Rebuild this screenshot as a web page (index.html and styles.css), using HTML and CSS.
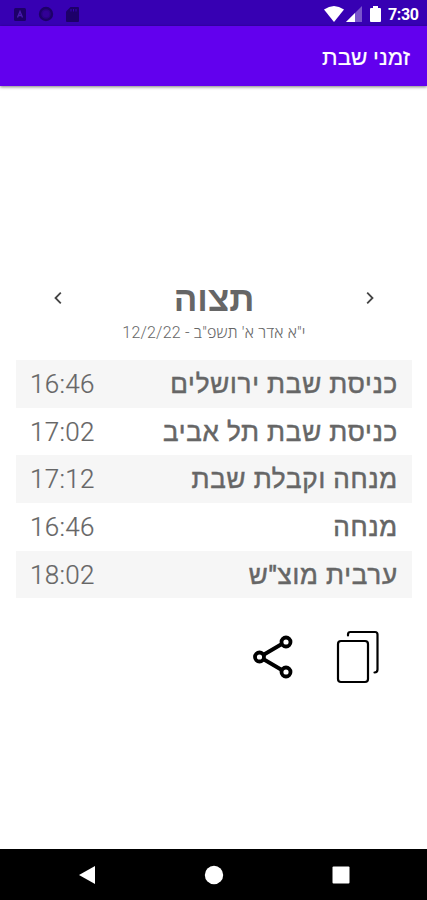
FILE: index.html
```
<!DOCTYPE html>
<html lang="he" dir="rtl">
<head>
<meta charset="UTF-8">
<meta name="viewport" content="width=device-width, initial-scale=1.0">
<title>זמני שבת</title>
<link rel="stylesheet" href="styles.css">
</head>
<body>

<div class="status-bar">
    <div class="notifications">
        <svg width="12" height="13" viewBox="0 0 12 13">
            <rect width="12" height="13" rx="1.5" fill="#1d0069"/>
            <path d="M3.5 9.5 6 3.5l2.5 6M4.5 7.5h3" fill="none" stroke="#4a1ab0" stroke-width="1.3"/>
        </svg>
        <svg width="16" height="16" viewBox="0 0 16 16">
            <circle cx="8" cy="8" r="6" fill="#2b0088" stroke="#1d0069" stroke-width="2.4"/>
            <circle cx="8" cy="8" r="3.2" fill="#320096"/>
        </svg>
        <svg width="13" height="15" viewBox="0 0 13 15">
            <path d="M4.5 0H12q1 0 1 1v13q0 1-1 1H1q-1 0-1-1V4.5z" fill="#1d0069"/>
            <path d="M5 2v2.5M7.5 2v2.5M10 2v2.5" stroke="#3700b3" stroke-width="1"/>
        </svg>
    </div>
    <div class="system">
        <svg width="20" height="16" viewBox="0 0 20 16">
            <path d="M0 3.5Q10-3.5 20 3.5L10 16z" fill="#fff"/>
        </svg>
        <svg class="signal" width="16" height="16" viewBox="0 0 16 16">
            <path d="M0 16 16 0v16z" fill="#7a54cc"/>
            <path d="M0 16 9 7v9z" fill="#fff"/>
        </svg>
        <svg class="battery" width="11" height="16" viewBox="0 0 11 16">
            <path d="M3 0h5v2h2q1 0 1 1v12q0 1-1 1H1q-1 0-1-1V3q0-1 1-1h2z" fill="#fff"/>
        </svg>
        <span class="clock">7:30</span>
    </div>
</div>

<header class="app-bar">
    <h1>זמני שבת</h1>
</header>

<main>
    <div class="week">
        <button class="arrow" aria-label="הקודם">
            <svg width="8" height="14" viewBox="0 0 8 14"><path d="M1.2 1.7 6.5 7 1.2 12.3"/></svg>
        </button>
        <div class="parasha">
            <h2>תצוה</h2>
            <p>י"א אדר א' תשפ"ב - 12/2/22</p>
        </div>
        <button class="arrow" aria-label="הבא">
            <svg width="8" height="14" viewBox="0 0 8 14"><path d="M6.8 1.7 1.5 7l5.3 5.3"/></svg>
        </button>
    </div>

    <ul class="times">
        <li><span class="name">כניסת שבת ירושלים</span><span class="time">16:46</span></li>
        <li><span class="name">כניסת שבת תל אביב</span><span class="time">17:02</span></li>
        <li><span class="name">מנחה וקבלת שבת</span><span class="time">17:12</span></li>
        <li><span class="name">מנחה</span><span class="time">16:46</span></li>
        <li><span class="name">ערבית מוצ"ש</span><span class="time">18:02</span></li>
    </ul>

    <div class="actions">
        <button aria-label="העתקה">
            <svg width="44" height="54" viewBox="0 0 44 54" fill="none" stroke="#000" stroke-width="2.2" stroke-linecap="round">
                <rect x="2" y="11" width="30" height="41" rx="3"/>
                <path d="M12 5.5v-1Q12 2 14.5 2H39q2.5 0 2.5 2.5v35q0 3-3 3"/>
            </svg>
        </button>
        <button aria-label="שיתוף">
            <svg width="42" height="46" viewBox="0 0 42 46" fill="none" stroke="#000" stroke-width="3.8">
                <path d="M12 20.5 29 10.5M12 25.5l17 10"/>
                <circle cx="7.5" cy="23" r="4.5"/>
                <circle cx="34" cy="8" r="4.5"/>
                <circle cx="34" cy="38" r="4.5"/>
            </svg>
        </button>
    </div>
</main>

<nav class="nav-bar">
    <svg width="18" height="20" viewBox="0 0 18 20"><path d="M17 1v18L1 10z"/></svg>
    <svg width="20" height="20" viewBox="0 0 20 20"><circle cx="10" cy="10" r="9.2"/></svg>
    <svg width="18" height="18" viewBox="0 0 18 18"><rect x=".5" y=".5" width="17" height="17" rx="1"/></svg>
</nav>

</body>
</html>
```
FILE: styles.css
```
* {
    box-sizing: border-box;
}
body {
    display: flex;
    flex-direction: column;
    height: 900px;
    margin: 0;
    overflow: hidden;
    background-color: #fff;
    color: #666;
    font-family: Roboto, sans-serif;
}
h1, h2, p, ul {
    margin: 0;
    padding: 0;
}
svg {
    display: block;
}
button {
    padding: 0;
    border: none;
    background: none;
    cursor: pointer;
}
.status-bar {
    display: flex;
    direction: ltr;
    justify-content: space-between;
    align-items: center;
    height: 26px;
    padding: 2px 8px 0 14px;
    background-color: #3700b3;
    color: #fff;
}
.notifications, .system {
    display: flex;
    align-items: center;
}
.notifications {
    gap: 12px;
}
.signal {
    margin-left: 2px;
}
.battery {
    margin-left: 8px;
}
.clock {
    width: 31px;
    margin-left: 7px;
    font-size: 16px;
    font-weight: 700;
    letter-spacing: -0.4px;
}
.app-bar {
    display: flex;
    align-items: center;
    height: 60px;
    padding: 3px 17px 0;
    background-color: #6200ee;
    box-shadow: 0 1px 3px rgba(0,0,0,0.5);
    color: #fff;
}
.app-bar h1 {
    font-size: 22.5px;
    font-weight: 500;
    -webkit-text-stroke: 0.2px;
}
main {
    flex: 1;
    padding: 190px 15px 0 16px;
}
.week {
    display: flex;
    justify-content: space-between;
    height: 84px;
    padding: 0 38px;
}
.arrow {
    align-self: flex-start;
    margin-top: 15px;
}
.arrow svg {
    fill: none;
    stroke: #444;
    stroke-width: 1.8;
}
.parasha {
    padding-top: 1px;
    text-align: center;
}
.parasha h2 {
    height: 45px;
    font-size: 35px;
    line-height: 45px;
    font-weight: 700;
}
.parasha p {
    font-family: Roboto, "Open Sans", sans-serif;
    font-size: 16px;
    line-height: 22px;
    font-weight: 300;
    letter-spacing: 0.2px;
}
.times {
    list-style: none;
}
.times li {
    display: flex;
    justify-content: space-between;
    align-items: center;
    height: 47.7px;
    padding: 0 14px;
}
.times li:nth-child(odd) {
    background-color: #f6f6f6;
}
.name {
    padding-top: 1px;
    font-size: 26px;
    font-weight: 500;
    letter-spacing: 0.8px;
    -webkit-text-stroke: 0.5px;
}
.time {
    font-size: 26px;
    font-weight: 300;
    letter-spacing: 0.3px;
    -webkit-text-stroke: 0.2px;
}
.actions {
    display: flex;
    align-items: center;
    gap: 42px;
    padding: 32px 32px 0;
}
.nav-bar {
    display: flex;
    direction: ltr;
    justify-content: space-between;
    align-items: center;
    height: 51px;
    padding: 0 77px 0 78px;
    background-color: #000;
    fill: #fff;
}
```
